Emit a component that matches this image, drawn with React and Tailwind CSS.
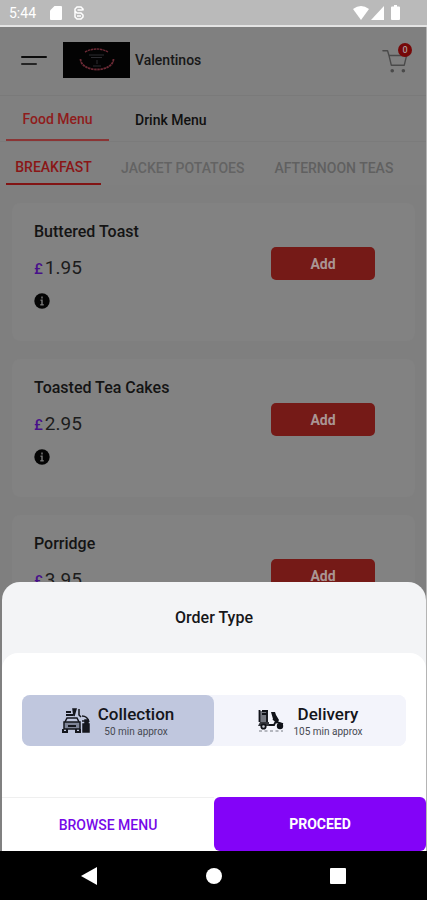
import React from "react";

const dishes = [
  { name: "Buttered Toast", price: "1.95" },
  { name: "Toasted Tea Cakes", price: "2.95" },
  { name: "Porridge", price: "3.95" },
];

function StatusBar() {
  return (
    <div className="flex h-[27px] shrink-0 items-center border-b-2 border-[#e4e4e4] bg-[#bababa] pr-[27px] pl-[9px] text-white">
      <span className="text-[14px] leading-5">5:44</span>
      <svg className="ml-[14px] h-[14px] w-3" viewBox="0 0 12 14" fill="currentColor" aria-hidden="true">
        <path d="M4.500 0H11a1 1 0 0 1 1 1v12a1 1 0 0 1-1 1H1a1 1 0 0 1-1-1V4.500z" />
      </svg>
      <svg className="ml-3 h-[14px] w-[10px]" viewBox="0 0 10 14" fill="none" stroke="currentColor" strokeWidth="1.500" aria-hidden="true">
        <path d="M9 4.500V3L7 1H3L1 3v2l2 2h4l2 2v2l-2 2H3l-2-2V5M3.500 4h5M3 10h4" />
      </svg>
      <div className="ml-auto flex items-center">
        <svg className="h-[14px] w-4" viewBox="0 0 16 14" fill="currentColor" aria-hidden="true">
          <path d="M0 3Q8-3 16 3L8 14z" />
        </svg>
        <svg className="ml-[2px] h-[14px] w-[13px]" viewBox="0 0 13 14" fill="currentColor" aria-hidden="true">
          <path d="M13 0v14H0z" />
        </svg>
        <svg className="ml-[7px] h-[15px] w-[9px]" viewBox="0 0 9 15" fill="currentColor" aria-hidden="true">
          <path d="M3 0h3v1.500h2a1 1 0 0 1 1 1V14a1 1 0 0 1-1 1H1a1 1 0 0 1-1-1V2.500a1 1 0 0 1 1-1h2z" />
        </svg>
      </div>
    </div>
  );
}

function Header() {
  return (
    <header className="flex h-[69px] items-center border-b border-[#7a7a7a] pr-[14px] pb-[2px] pl-[21px]">
      <button type="button" aria-label="Open navigation" className="flex w-[26px] flex-col gap-[5px]">
        <span className="h-[2px] w-full rounded-full bg-[#0c0c0c]" />
        <span className="h-[2px] w-4 rounded-full bg-[#242424]" />
      </button>
      <svg className="ml-4 h-9 w-[67px] bg-[#030303]" viewBox="0 0 67 36" fill="none" aria-hidden="true">
        <g stroke="#6b2a35" strokeWidth="1.800" strokeDasharray="2.500 0.600">
          <path d="M22 10Q34 4 45 10" strokeWidth="1.400" />
          <path d="M17.500 17C18 31 50 31 50.500 17" />
        </g>
        <path d="M26 13h15M28 15.500h11M34 18v4M30 24h8" stroke="#2c2c30" />
      </svg>
      <span className="ml-[5px] text-[14px] leading-5 font-medium text-[#181818]">Valentinos</span>
      <button type="button" aria-label="Basket, 0 items" className="relative ml-auto h-8 w-8">
        <svg className="absolute top-1 left-[2px] h-[26px] w-[26px]" viewBox="0 0 28 28" fill="none" stroke="#4a4a4a" strokeWidth="1.500" strokeLinecap="round" strokeLinejoin="round" aria-hidden="true">
          <path d="M1 3h5l1.500 5L10 18.500h14L26.500 8h-19" />
          <circle cx="11" cy="24.500" r="1.200" fill="#4a4a4a" />
          <circle cx="23" cy="24.500" r="1.200" fill="#4a4a4a" />
        </svg>
        <span className="absolute -top-px right-0 flex h-[14px] w-[14px] items-center justify-center rounded-full bg-[#760808] text-[9px] leading-none font-medium text-[#a99]">0</span>
      </button>
    </header>
  );
}

function Dish({ name, price }) {
  return (
    <article className="flex h-[138px] shrink-0 justify-between rounded-lg bg-[#828282] pr-10 pl-[22px]">
      <div className="pt-[19px]">
        <h2 className="text-[16px] leading-5 font-medium text-[#141414]">{name}</h2>
        <p className="mt-[14px] text-[19px] leading-6 text-[#1c1c1c]">
          <span className="mr-[2px] text-[15px] font-medium text-[#48108a]">£</span>
          {price}
        </p>
        <button type="button" aria-label={"About " + name} className="mt-3 block">
          <svg className="h-4 w-4" viewBox="0 0 16 16" aria-hidden="true">
            <circle cx="8" cy="8" r="7.700" fill="#050505" />
            <path d="M8 3.500v2M6.500 7.200H8v4.300M6.300 11.700h3.400" stroke="#757575" strokeWidth="1.500" fill="none" />
          </svg>
        </button>
      </div>
      <button type="button" className="mt-[44px] h-[33px] w-[104px] rounded-[5px] bg-[#751a17] text-[14px] leading-5 font-bold text-[#aa9594]">Add</button>
    </article>
  );
}

function CarIcon() {
  return (
    <svg className="h-7 w-7" viewBox="0 0 28 28" fill="none" stroke="#15171e" strokeWidth="1.500" aria-hidden="true">
      <path d="M3 15l2-4h10l2 4" />
      <path d="M2 15h16v7H2z" fill="#7e8497" />
      <path d="M1 22v3h4v-3M14 22v3h4v-3M6 19h8" strokeWidth="2" />
      <path d="M4 5h5M4 8h7" strokeWidth="2" />
      <path d="M11 2h3l-2 7z" fill="#15171e" />
      <path d="M17 2v6l2 2M20 9c4 0 6 2 7 6M20 14h4" />
      <path d="M21 17h6v8h-6zM23 13h3v4h-3z" fill="#15171e" />
    </svg>
  );
}

function ScooterIcon() {
  return (
    <svg className="h-6 w-7" viewBox="0 0 28 24" fill="none" stroke="#111319" strokeWidth="1.800" aria-hidden="true">
      <path d="M2 2h9v11H2z" fill="#73767f" stroke="none" />
      <path d="M2.500 1v12M5 2h6M5 5h5M10 2v11" />
      <path d="M3 13h9v4H1z" fill="#34363c" stroke="none" />
      <path d="M12 16h5l2-4-3-2" />
      <path d="M14 3h4l1 3 3 5-2 4-4-5z" fill="#111319" stroke="none" />
      <path d="M20 13l6 2" />
      <circle cx="6.500" cy="17.500" r="2.200" fill="#c9cbd3" />
      <circle cx="23" cy="17" r="2.300" fill="#111319" />
      <path d="M2 22h24" strokeDasharray="3 2.500" strokeWidth="1" stroke="#777a82" />
    </svg>
  );
}

function OrderOption({ title, note, icon, tone, defaultChecked }) {
  return (
    <label className={"flex h-[51px] flex-1 cursor-pointer items-center justify-center gap-2 rounded-lg " + tone}>
      <input type="radio" name="order-type" value={title} defaultChecked={defaultChecked} className="sr-only" />
      {icon}
      <span className="flex flex-col items-center pt-[2px]">
        <span className="text-[17px] leading-5 font-medium text-[#15161b]">{title}</span>
        <span className="text-[10px] leading-4 text-[#464952]">{note}</span>
      </span>
    </label>
  );
}

function OrderSheet() {
  return (
    <section role="dialog" aria-label="Order Type" className="absolute inset-x-0 bottom-0 ml-[2px] rounded-t-[18px] bg-[#f3f4f6]">
      <h2 className="flex h-[71px] items-center justify-center text-[16px] leading-5 font-medium text-[#16171a]">Order Type</h2>
      <div className="rounded-t-[16px] bg-white">
        <div className="px-5 pt-[42px] pb-[51px]">
          <div className="flex rounded-lg bg-[#f3f4fb]">
            <OrderOption title="Collection" note="50 min approx" icon={<CarIcon />} tone="bg-[#c0c7de]" defaultChecked />
            <OrderOption title="Delivery" note="105 min approx" icon={<ScooterIcon />} tone="bg-[#f3f4fb]" />
          </div>
        </div>
        <div className="flex h-[54px] text-[14px] leading-5">
          <button type="button" className="flex-1 border-t border-[#efefef] font-medium text-[#7609e8]">BROWSE MENU</button>
          <button type="button" className="flex-1 rounded-md bg-[#8303f8] font-bold text-white">PROCEED</button>
        </div>
      </div>
    </section>
  );
}

function SystemNav() {
  return (
    <nav aria-label="System" className="flex h-[49px] shrink-0 items-center justify-between bg-black px-[81px] text-white">
      <button type="button" aria-label="Back">
        <svg className="h-[18px] w-4" viewBox="0 0 16 18" fill="currentColor"><path d="M16 0v18L0 9z" /></svg>
      </button>
      <button type="button" aria-label="Home" className="h-4 w-4 rounded-full bg-white" />
      <button type="button" aria-label="Recent apps" className="h-4 w-4 rounded-[1px] bg-white" />
    </nav>
  );
}

export default function App() {
  return (
    <div className="flex h-screen w-full flex-col overflow-hidden bg-[#808080] font-['Roboto',sans-serif]">
      <StatusBar />
      <main className="relative min-h-0 flex-1 overflow-hidden border-r border-[#b4b4b4]">
        <Header />
        <nav aria-label="Menus" className="flex h-[46px] border-b border-[#7b7b7b] pl-[6px] text-[14px] leading-5 font-medium">
          <a href="#food" className="flex w-[103px] items-center justify-center border-b-2 border-[#8b3535] pt-[2px] text-[#8f1c1c]">Food Menu</a>
          <a href="#drinks" className="ml-[26px] flex items-center pt-[2px] text-[#101010]">Drink Menu</a>
        </nav>
        <nav aria-label="Categories" className="flex h-[43px] pl-[6px] text-[14px] leading-5 font-medium whitespace-nowrap">
          <a href="#breakfast" className="flex w-[95px] items-center justify-center border-b-2 border-[#821414] pt-[9px] text-[#8a1616]">BREAKFAST</a>
          <a href="#jacket" className="ml-5 flex items-center pt-[9px] text-[#636363]">JACKET POTATOES</a>
          <a href="#teas" className="ml-[30px] flex items-center pt-[9px] text-[#606060]">AFTERNOON TEAS</a>
        </nav>
        <div className="flex flex-col gap-[18px] bg-[#7f7f7f] pt-[18px] pr-[11px] pl-3">
          {dishes.map((dish) => (
            <Dish key={dish.name} {...dish} />
          ))}
        </div>
        <OrderSheet />
      </main>
      <SystemNav />
    </div>
  );
}
